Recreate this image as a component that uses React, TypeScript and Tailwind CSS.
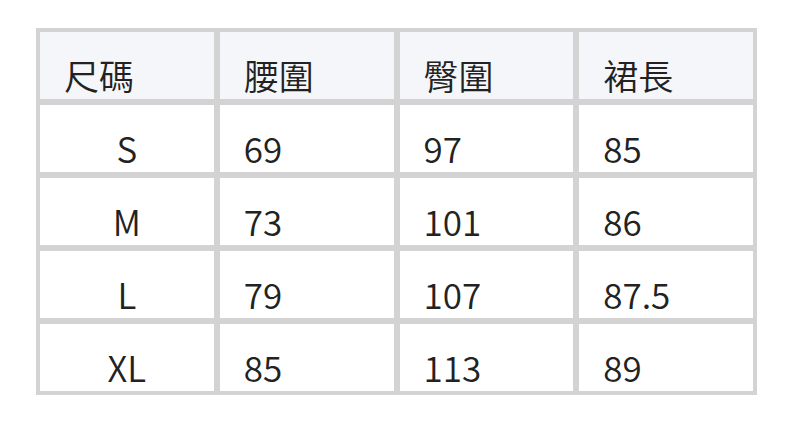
import React from "react";

const header = ["尺碼", "腰圍", "臀圍", "裙長"];
const rows = [
  ["S", "69", "97", "85"],
  ["M", "73", "101", "86"],
  ["L", "79", "107", "87.5"],
  ["XL", "85", "113", "89"],
];

export default function App() {
  return (
    <div
      className="w-[792px] h-[422px] bg-white pt-[28px] pl-[36px]"
      style={{ fontFamily: '"Noto Sans CJK TC", "Noto Sans", sans-serif' }}
    >
      <div className="w-[721px] bg-[#d3d3d3] p-[4px] grid grid-cols-4 gap-[6px] text-[35px] leading-[48px] font-[350] text-[#222222]">
        {header.map((h) => (
          <div
            key={h}
            className="h-[67px] bg-[#f5f6fa] flex items-end pl-[24px]"
          >
            {h}
          </div>
        ))}
        {rows.map((r) =>
          r.map((c, i) => (
            <div
              key={r[0] + i}
              className={
                "h-[67px] bg-white flex items-end " +
                (i === 0 ? "justify-center" : "pl-[24px]")
              }
            >
              {c}
            </div>
          ))
        )}
      </div>
    </div>
  );
}
